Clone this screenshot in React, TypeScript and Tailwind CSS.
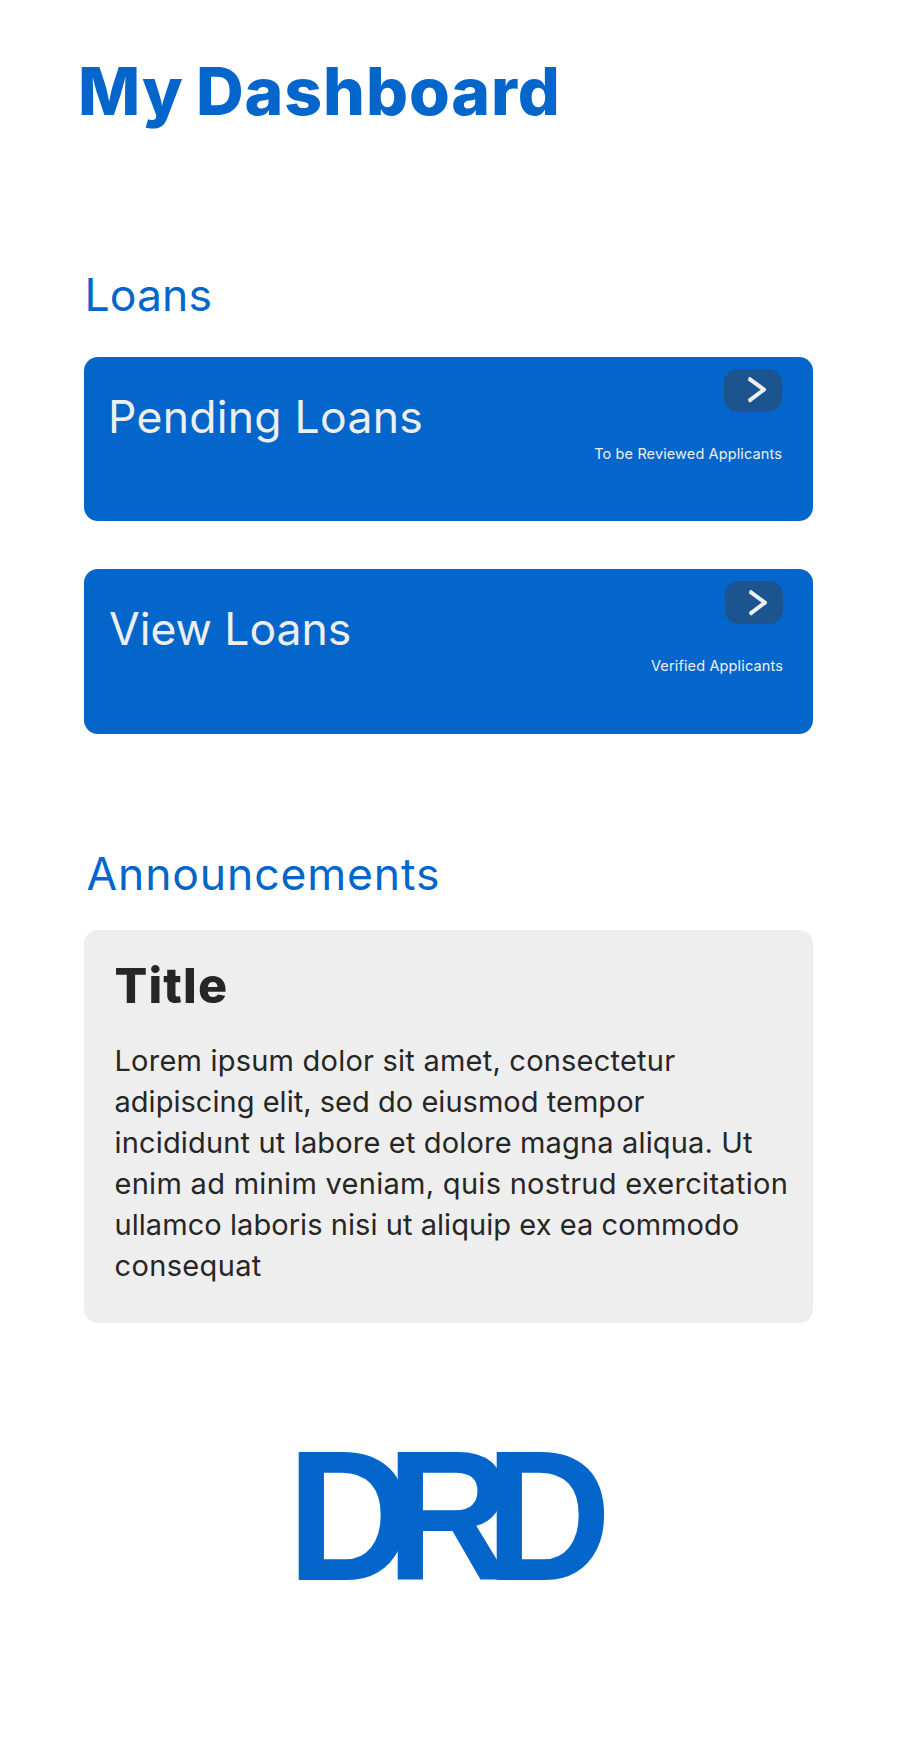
import React from 'react';

function Chevron({ className }: { className: string }) {
  return (
    <svg viewBox="0 0 22 30" className={className} fill="none" stroke="#eeeeee" strokeWidth="4" strokeLinejoin="round">
      <path d="M3 3.6 L18 14.6 L3 25.8" />
      <path d="M3.8 3.7 L4.1 3.9 M3.8 25.7 L4.1 25.5" strokeWidth="3" strokeLinecap="round" />
    </svg>
  );
}

type LoanCardProps = {
  title: string;
  caption: string;
  className: string;
  titleClass: string;
  captionClass: string;
  chevronClass: string;
};

function LoanCard({ title, caption, className, titleClass, captionClass, chevronClass }: LoanCardProps) {
  return (
    <section className={`flex w-[729px] items-start justify-between rounded-[14px] bg-[#0466ca] text-[#eeeeee] ${className}`}>
      <h3 className={`mt-8 text-[44.5px] leading-[56px] ${titleClass}`}>{title}</h3>
      <div className="mt-3 flex flex-col items-end">
        <button type="button" aria-label={title} className="flex h-[43px] w-[58px] rounded-[14px] bg-[#1c548f]">
          <Chevron className={`ml-[22px] h-[30px] w-[22px] ${chevronClass}`} />
        </button>
        <p className={`mt-8 text-[14.5px] leading-5 ${captionClass}`}>{caption}</p>
      </div>
    </section>
  );
}

export default function App() {
  return (
    <main className="flex min-h-[1749px] w-full flex-col items-start bg-white pl-[84px] pt-[51px] font-['Inter',sans-serif] text-[#0466ca]">
      <h1 className="-ml-[6px] whitespace-nowrap text-[66px] font-extrabold leading-[80px] tracking-[0.9px] [word-spacing:-3px]">My Dashboard</h1>

      <h2 className="ml-[0.5px] mt-[136px] text-[44.5px] leading-[56px] tracking-[0.1px]">Loans</h2>
      <LoanCard
        title="Pending Loans"
        caption="To be Reviewed Applicants"
        className="mt-[34px] h-[164.4px] pl-6 pr-[31px]"
        titleClass="tracking-[0.26px]"
        captionClass="tracking-[0.12px]"
        chevronClass="mt-[6px]"
      />
      <LoanCard
        title="View Loans"
        caption="Verified Applicants"
        className="mt-[47.6px] h-[164.7px] pl-[25px] pr-[30px]"
        titleClass="tracking-[-0.04px]"
        captionClass="tracking-[0.14px]"
        chevronClass="mt-[7px]"
      />

      <h2 className="ml-[2.5px] mt-[112.3px] text-[44.5px] leading-[56px] tracking-[0.85px]">Announcements</h2>
      <article className="mt-7 h-[393px] w-[729px] rounded-[14px] bg-[#eeeeee] pl-[30.5px] pt-[26px] text-[#262626]">
        <h3 className="text-[48.5px] font-extrabold leading-[60px] tracking-[1.1px]">Title</h3>
        <p className="mt-6 whitespace-nowrap text-[29px] leading-[41px]">
          <span className="block tracking-[0.22px]">Lorem ipsum dolor sit amet, consectetur</span>
          <span className="block tracking-[0.03px]">adipiscing elit, sed do eiusmod tempor</span>
          <span className="block tracking-[0.16px]">incididunt ut labore et dolore magna aliqua. Ut</span>
          <span className="block tracking-[0.29px]">enim ad minim veniam, quis nostrud exercitation</span>
          <span className="block tracking-[0.06px]">ullamco laboris nisi ut aliquip ex ea commodo</span>
          <span className="block tracking-[0.36px]">consequat</span>
        </p>
      </article>

      <div className="ml-[202.8px] mt-[113px] origin-left scale-x-[0.943] font-['Liberation_Sans',Arial,sans-serif] text-[185.6px] font-bold leading-[160px] tracking-[-29px]">DRD</div>
    </main>
  );
}
